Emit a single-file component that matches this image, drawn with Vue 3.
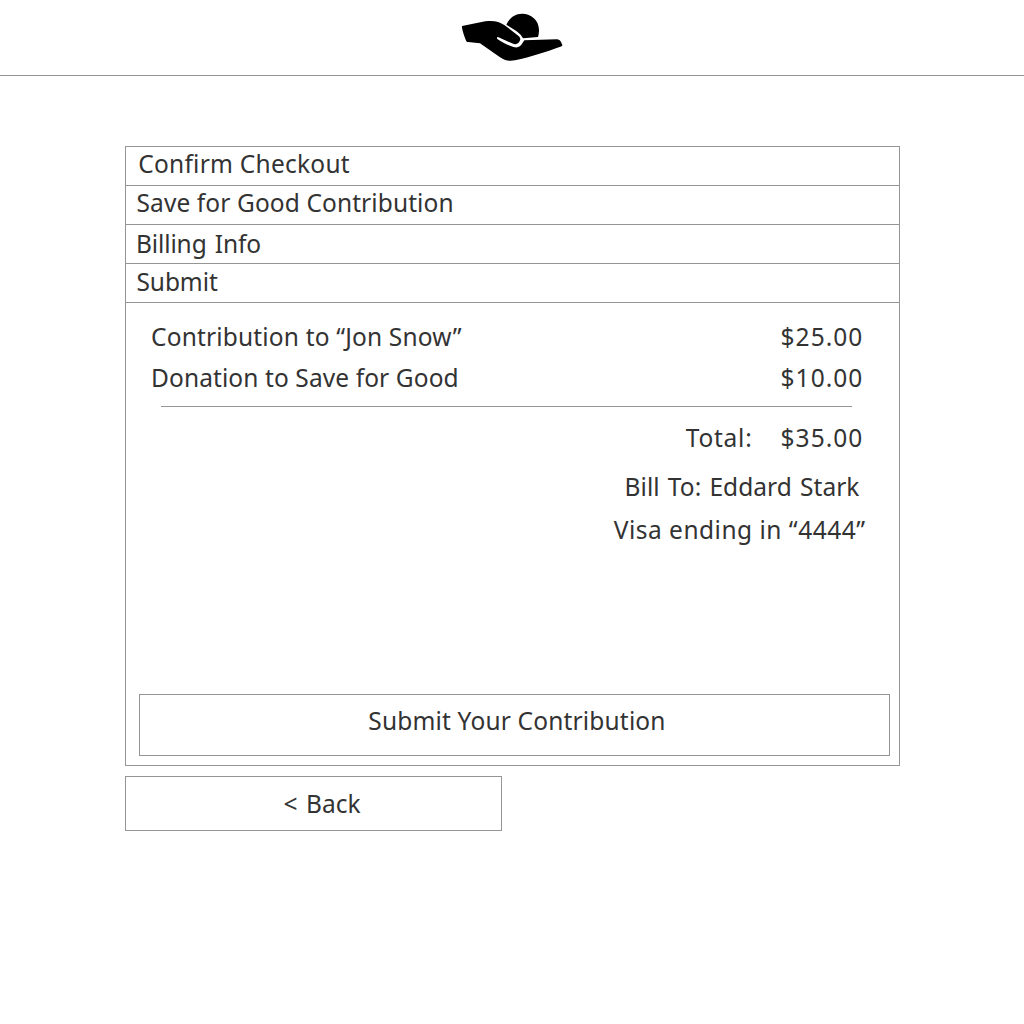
<script setup>
const steps = [
  { label: 'Confirm Checkout', key: 'confirm' },
  { label: 'Save for Good Contribution', key: 'save' },
  { label: 'Billing Info', key: 'billing' },
  { label: 'Submit', key: 'submit' },
]
const items = [
  { label: 'Contribution to “Jon Snow”', amount: '$25.00', key: 'contribution' },
  { label: 'Donation to Save for Good', amount: '$10.00', key: 'donation' },
]
</script>

<template>
  <div class="page">
    <header class="header">
      <svg class="logo" viewBox="0 0 360 210" aria-label="Save for Good">
        <path d="M163 62 C171 43 188 29 210 29 C239 29 261 50 261 78 C261 86 260 94 258 99 L213 103 C208 95 203 89 194 82 Z" />
        <path d="M30 66 L100 52 C124 49 142 52 158 64 L191 89 C202 97 207 101 204 109 C201 119 193 124 180 118 L138 99 C134 99 134 103 137 106 C153 117 170 124 184 129 C198 133 205 128 211 118 L217 109 L314 106 C321 106 324 109 327 114 L331 123 C331 126 328 127 325 128 C285 143 237 158 189 169 C169 173 157 168 143 159 L84 118 L48 114 C44 114 43 112 41 107 C36 94 32 81 30 71 Z" />
      </svg>
    </header>

    <main class="checkout">
      <section class="panel">
        <h2 v-for="step in steps" :key="step.key" class="step" :class="step.key">{{ step.label }}</h2>

        <div class="summary">
          <div v-for="item in items" :key="item.key" class="line" :class="item.key">
            <span class="label">{{ item.label }}</span>
            <span class="amount">{{ item.amount }}</span>
          </div>
          <hr class="divider" />
          <div class="line total">
            <span class="label">Total:</span>
            <span class="amount">$35.00</span>
          </div>
          <p class="bill">Bill To: Eddard Stark</p>
          <p class="card">Visa ending in “4444”</p>
          <button class="send" type="button">Submit Your Contribution</button>
        </div>
      </section>
      <button class="back" type="button">&lt; Back</button>
    </main>
  </div>
</template>

<style>
body {
  margin: 0;
  background: #fff;
}
</style>

<style scoped>
.page {
  min-height: 1024px;
  font: 24.5px/30px "Noto Sans", sans-serif;
  color: #333;
}
.page * {
  box-sizing: border-box;
}
.header {
  display: flex;
  justify-content: center;
  height: 76px;
  padding-top: 4px;
  border-bottom: 1px solid #959595;
}
.logo {
  width: 120px;
  height: 70px;
}
.checkout {
  display: flex;
  flex-direction: column;
  align-items: flex-start;
  gap: 10px;
  width: 775px;
  margin: 70px 0 0 125px;
}
.panel {
  display: flex;
  flex-direction: column;
  width: 100%;
  height: 620px;
  border: 1px solid #959595;
}
.step {
  height: 39px;
  margin: 0;
  padding: 2px 0 0 10.5px;
  border-bottom: 1px solid #959595;
  font: inherit;
  white-space: nowrap;
}
.step.confirm {
  padding-left: 12.2px;
  letter-spacing: 0.25px;
}
.step.save {
  letter-spacing: 0.1px;
}
.step.billing {
  padding: 4px 0 0 10px;
  letter-spacing: -0.12px;
  word-spacing: 2px;
}
.step.submit {
  padding-top: 3px;
  letter-spacing: -0.1px;
}
.summary {
  display: flex;
  flex: 1;
  flex-direction: column;
  padding: 19px 9px 9px 13px;
}
.line {
  display: flex;
  justify-content: space-between;
  width: 725.5px;
  padding-left: 12px;
  white-space: nowrap;
}
.contribution .label {
  letter-spacing: 0.17px;
}
.donation {
  margin-top: 11px;
}
.donation .label {
  letter-spacing: 0.1px;
}
.amount {
  width: 84px;
  letter-spacing: 1.05px;
}
.divider {
  width: 691px;
  height: 1px;
  margin: 13px 0 0 22px;
  border: 0;
  background: #959595;
}
.total {
  justify-content: flex-end;
  gap: 28px;
  margin-top: 16px;
}
.total .label {
  letter-spacing: 0.75px;
}
.bill,
.card {
  align-self: flex-end;
  margin: 19px 30.5px 0 0;
  letter-spacing: 0.05px;
  word-spacing: 1.7px;
  white-space: nowrap;
}
.card {
  margin: 13px 24.5px 0 0;
  letter-spacing: 0.5px;
  word-spacing: 0;
}
button {
  border: 1px solid #959595;
  background: transparent;
  color: inherit;
  font: inherit;
}
.send {
  width: 751px;
  height: 62px;
  margin-top: auto;
  padding: 0 0 8px 5px;
  letter-spacing: 0.17px;
}
.back {
  width: 377px;
  height: 55px;
  padding: 0 0 0 17px;
  letter-spacing: 0;
  word-spacing: 2.2px;
}
</style>
